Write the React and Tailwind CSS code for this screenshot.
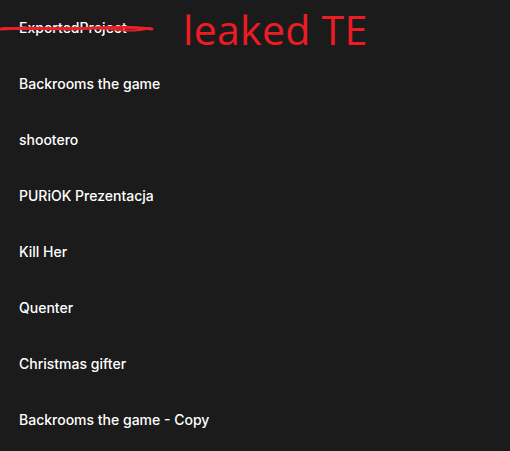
export default function App() {
  const items = [
    "ExportedProject",
    "Backrooms the game",
    "shootero",
    "PURiOK Prezentacja",
    "Kill Her",
    "Quenter",
    "Christmas gifter",
    "Backrooms the game - Copy",
  ];
  return (
    <div className="w-[510px] h-[451px] bg-[#1b1b1b] overflow-hidden relative" style={{ fontFamily: "'Inter', sans-serif" }}>
      <ul className="flex flex-col">
        {items.map((t, i) => (
          <li key={i} className="h-14 flex items-center pl-[19px] text-white text-sm font-medium">
            {t}
          </li>
        ))}
      </ul>
      <svg className="absolute left-0 top-0" width="160" height="45" viewBox="0 0 160 45">
        <path d="M1 29 C 30 27, 60 30, 95 28 S 140 28, 152 29" stroke="#e8202a" strokeWidth="3" fill="none" strokeLinecap="round" />
        <path d="M4 28 C 40 31, 80 26, 110 29 S 140 30, 150 28" stroke="#e8202a" strokeWidth="2" fill="none" strokeLinecap="round" />
      </svg>
      <div className="absolute left-[183px] top-[9px] text-[#ed1c24] text-[41px] leading-none tracking-[0.3px]" style={{ fontFamily: "'Open Sans', sans-serif" }}>
        leaked TE
      </div>
    </div>
  );
}
